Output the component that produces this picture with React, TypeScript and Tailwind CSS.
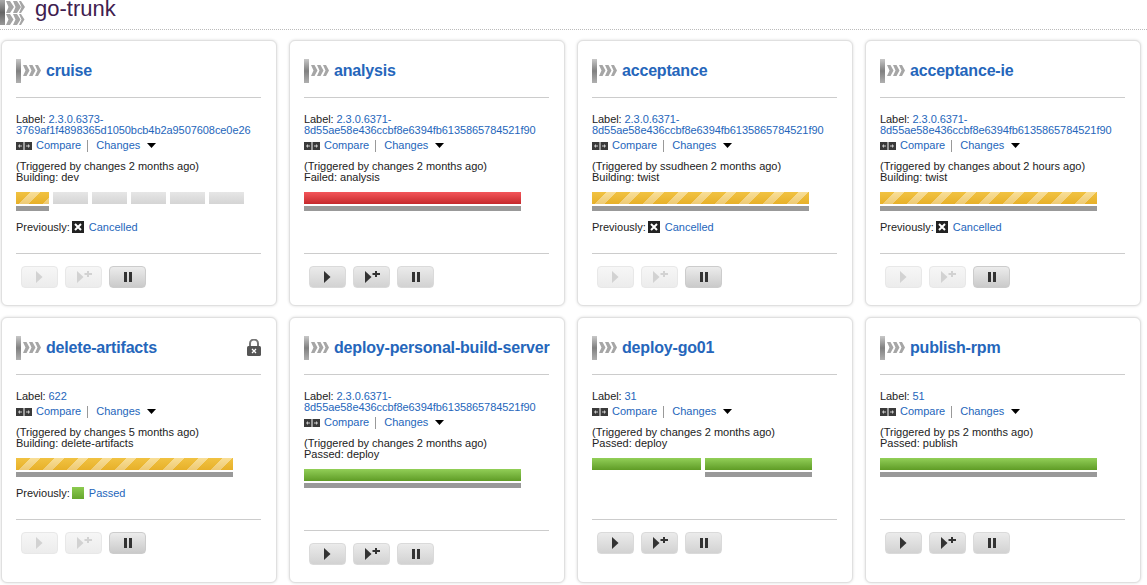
type Status = 'building' | 'failed' | 'passed' | 'idle'

interface Stage {
  width: number
  status: Status
  current?: boolean
}

interface Pipeline {
  name: string
  labelLines: string[]
  trigger: string
  stageText: string
  stages: Stage[]
  previous?: 'Cancelled' | 'Passed'
  locked?: boolean
  enabled?: boolean
}

const shaA = '8d55ae58e436ccbf8e6394fb6135865784521f90'

const pipelines: Pipeline[] = [
  {
    name: 'cruise',
    labelLines: ['2.3.0.6373-', '3769af1f4898365d1050bcb4b2a9507608ce0e26'],
    trigger: '(Triggered by changes 2 months ago)',
    stageText: 'Building: dev',
    stages: [
      { width: 33, status: 'building', current: true },
      { width: 35, status: 'idle' },
      { width: 35, status: 'idle' },
      { width: 35, status: 'idle' },
      { width: 35, status: 'idle' },
      { width: 35, status: 'idle' },
    ],
    previous: 'Cancelled',
  },
  {
    name: 'analysis',
    labelLines: ['2.3.0.6371-', shaA],
    trigger: '(Triggered by changes 2 months ago)',
    stageText: 'Failed: analysis',
    stages: [{ width: 217, status: 'failed', current: true }],
    enabled: true,
  },
  {
    name: 'acceptance',
    labelLines: ['2.3.0.6371-', shaA],
    trigger: '(Triggered by ssudheen 2 months ago)',
    stageText: 'Building: twist',
    stages: [{ width: 217, status: 'building', current: true }],
    previous: 'Cancelled',
  },
  {
    name: 'acceptance-ie',
    labelLines: ['2.3.0.6371-', shaA],
    trigger: '(Triggered by changes about 2 hours ago)',
    stageText: 'Building: twist',
    stages: [{ width: 217, status: 'building', current: true }],
    previous: 'Cancelled',
  },
  {
    name: 'delete-artifacts',
    labelLines: ['622'],
    trigger: '(Triggered by changes 5 months ago)',
    stageText: 'Building: delete-artifacts',
    stages: [{ width: 217, status: 'building', current: true }],
    previous: 'Passed',
    locked: true,
  },
  {
    name: 'deploy-personal-build-server',
    labelLines: ['2.3.0.6371-', shaA],
    trigger: '(Triggered by changes 2 months ago)',
    stageText: 'Passed: deploy',
    stages: [{ width: 217, status: 'passed', current: true }],
    enabled: true,
  },
  {
    name: 'deploy-go01',
    labelLines: ['31'],
    trigger: '(Triggered by changes 2 months ago)',
    stageText: 'Passed: deploy',
    stages: [
      { width: 109, status: 'passed' },
      { width: 107, status: 'passed', current: true },
    ],
    enabled: true,
  },
  {
    name: 'publish-rpm',
    labelLines: ['51'],
    trigger: '(Triggered by ps 2 months ago)',
    stageText: 'Passed: publish',
    stages: [{ width: 217, status: 'passed', current: true }],
    enabled: true,
  },
]

function Chevrons() {
  return (
    <div className="flex items-center gap-[2px] shrink-0">
      <div className="w-[5px] h-[24px] bg-gradient-to-b from-[#c8c8c8] via-[#808080] to-[#b0b0b0]" />
      <svg width="18" height="11" viewBox="0 0 18 11" fill="#a6a6a6">
        <path d="M0 0h3.500l3 5.500-3 5.500H0l2.500-5.500z" />
        <path d="M6 0h3.500l3 5.500-3 5.500H6l2.500-5.500z" />
        <path d="M12 0h3l3 5.500-3 5.500h-3l2.500-5.500z" />
      </svg>
    </div>
  )
}

function StageBar({ stage }: { stage: Stage }) {
  return (
    <div className="shrink-0" style={{ width: stage.width }}>
      {stage.status === 'building' && (
        <div className="h-[12px] bg-[linear-gradient(to_bottom,rgba(255,255,255,0.08),rgba(190,120,0,0.18)),repeating-linear-gradient(135deg,#f0bd32_0px,#f0bd32_10px,#f8dc8e_10px,#f8dc8e_17px)]" />
      )}
      {stage.status === 'failed' && (
        <div className="h-[12px] bg-gradient-to-b from-[#f4555a] to-[#c5282c]" />
      )}
      {stage.status === 'passed' && (
        <div className="h-[12px] bg-gradient-to-b from-[#92cf57] to-[#5f9c25]" />
      )}
      {stage.status === 'idle' && (
        <div className="h-[12px] bg-gradient-to-b from-[#e6e6e6] to-[#d4d4d4]" />
      )}
      {stage.current && <div className="mt-[2px] h-[5px] bg-[#999]" />}
    </div>
  )
}

function CompareIcon() {
  return (
    <svg width="16" height="8" viewBox="0 0 16 8" className="shrink-0">
      <rect width="16" height="8" fill="#3a3a3a" />
      <rect x="7.500" width="1" height="8" fill="#fff" />
      <path d="M2 4l2-2v1.500h2v1H4V6zM14 4l-2-2v1.500h-2v1h2V6z" fill="#c8c8c8" />
    </svg>
  )
}

function PreviousIcon({ kind }: { kind: 'Cancelled' | 'Passed' }) {
  if (kind === 'Passed') {
    return <div className="w-[12px] h-[12px] bg-gradient-to-b from-[#8ccb4f] to-[#66a62c] shrink-0" />
  }
  return (
    <svg width="12" height="12" viewBox="0 0 12 12" className="shrink-0">
      <rect width="12" height="12" fill="#222" />
      <path d="M3 3l6 6M9 3l-6 6" stroke="#fff" strokeWidth="2" />
    </svg>
  )
}

function ActionButton({
  kind,
  enabled,
  strong,
}: {
  kind: 'play' | 'playPlus' | 'pause'
  enabled: boolean
  strong?: boolean
}) {
  const fill = enabled ? '#333' : '#d2d2d2'
  let skin = 'border-[#e8e8e8] from-[#f6f6f6] to-[#ececec]'
  if (enabled) skin = 'border-[#dadada] from-[#ebebeb] to-[#d2d2d2]'
  if (strong) skin = 'border-[#cccccc] from-[#ececec] to-[#cacaca]'
  return (
    <button
      className={`w-[37px] h-[22px] flex items-center justify-center rounded-[4px] border bg-gradient-to-b ${skin}`}
    >
      {kind === 'play' && (
        <svg width="7" height="12" viewBox="0 0 7 12" fill={fill}>
          <path d="M0 0l6.500 6L0 12z" />
        </svg>
      )}
      {kind === 'playPlus' && (
        <svg width="16" height="12" viewBox="0 0 16 12" fill={fill} className="ml-[2px]">
          <path d="M0 0l6.500 6L0 12z" />
          <path d="M10 0h2v2h3v2h-3v2h-2V4H7.500V2H10z" />
        </svg>
      )}
      {kind === 'pause' && (
        <svg width="8" height="10" viewBox="0 0 8 10" fill="#333">
          <rect width="3" height="10" />
          <rect x="5" width="3" height="10" />
        </svg>
      )}
    </button>
  )
}

function PipelineCard({ pipeline }: { pipeline: Pipeline }) {
  const enabled = !!pipeline.enabled
  return (
    <div className="h-[266px] rounded-[6px] border border-[#e0e0e0] bg-white pl-[14px] pr-[15px] shadow-[0_0_3px_rgba(0,0,0,0.15)] flex flex-col">
      <div className="h-[57px] border-b border-[#ccc] flex items-start">
        <div className="mt-[17px] flex items-center w-full">
          <Chevrons />
          <span className="ml-[5px] text-[16px] leading-[24px] font-bold tracking-[-0.18px] text-[#2566bb] whitespace-nowrap pt-[1px]">
            {pipeline.name}
          </span>
          {pipeline.locked && (
            <svg width="14" height="17" viewBox="0 0 14 17" className="ml-auto">
              <path d="M3 8V4.500a4 4 0 0 1 8 0V8" fill="none" stroke="#777" strokeWidth="2" />
              <rect y="7" width="14" height="10" rx="1.500" fill="#555" />
              <path d="M5 10l4 4M9 10l-4 4" stroke="#fff" strokeWidth="1.300" />
            </svg>
          )}
        </div>
      </div>

      <div className="pt-[16px] text-[11px] leading-[11px] text-[#222]">
        <div className="tracking-[-0.07px]">
          Label:{' '}
          {pipeline.labelLines.map((line, i) => (
            <span key={line} className="text-[#2566bb]">
              {i > 0 && <br />}
              {line}
            </span>
          ))}
        </div>
        <div className="mt-[3px] h-[13px] flex items-center text-[#2566bb]">
          <CompareIcon />
          <span className="ml-[4px]">Compare</span>
          <div className="ml-[6px] w-px h-[12px] bg-[#999]" />
          <span className="ml-[8px]">Changes</span>
          <svg width="9" height="5" viewBox="0 0 9 5" className="ml-[7px]">
            <path d="M0 0h9L4.500 5z" fill="#000" />
          </svg>
        </div>
        <div className="mt-[9px]">{pipeline.trigger}</div>
        <div>{pipeline.stageText}</div>
        <div className="mt-[9px] h-[19px] flex gap-[4px]">
          {pipeline.stages.map((stage, i) => (
            <StageBar key={i} stage={stage} />
          ))}
        </div>
        <div className="mt-[9px] h-[14px] flex items-center">
          {pipeline.previous && (
            <>
              <span>Previously:</span>
              <span className="ml-[2px]">
                <PreviousIcon kind={pipeline.previous} />
              </span>
              <span className="ml-[5px] text-[#2566bb]">{pipeline.previous}</span>
            </>
          )}
        </div>
      </div>

      <div className="mt-[19px] border-t border-[#ccc] pt-[12px] pl-[5px] flex gap-[7px]">
        <ActionButton kind="play" enabled={enabled} />
        <ActionButton kind="playPlus" enabled={enabled} />
        <ActionButton kind="pause" enabled strong={!enabled} />
      </div>
    </div>
  )
}

export default function App() {
  return (
    <div className="w-[1147px] h-[585px] overflow-hidden bg-white font-['Liberation_Sans',Arial,sans-serif]">
      <div className="h-[30px] border-b border-dotted border-[#bbb] flex items-start">
        <div className="w-[5px] h-[25px] bg-gradient-to-b from-[#aaa] via-[#666] to-[#999]" />
        <svg width="19" height="25" viewBox="0 0 19 25" fill="#a5a5a5" className="ml-[1px]">
          <path d="M0 1h4l4 6-4 6H0l2.500-6zM7 1h4l4 6-4 6H7l2.500-6zM13 1h2l4 6-4 6h-2l2.500-6z" />
          <path d="M0 14h4l3.500 5.500L4 25H0l2.500-5.500zM7 14h4l3.500 5.500L11 25H7l2.500-5.500zM13 14h2l3.500 5.500L15 25h-2l2.500-5.500z" />
        </svg>
        <span className="ml-[10px] text-[22px] leading-[18px] text-[#40204f]">go-trunk</span>
      </div>
      <div className="mt-[10px] pl-[1px] grid grid-cols-[repeat(4,276px)] gap-x-[12px] gap-y-[11px]">
        {pipelines.map((p) => (
          <PipelineCard key={p.name} pipeline={p} />
        ))}
      </div>
    </div>
  )
}
